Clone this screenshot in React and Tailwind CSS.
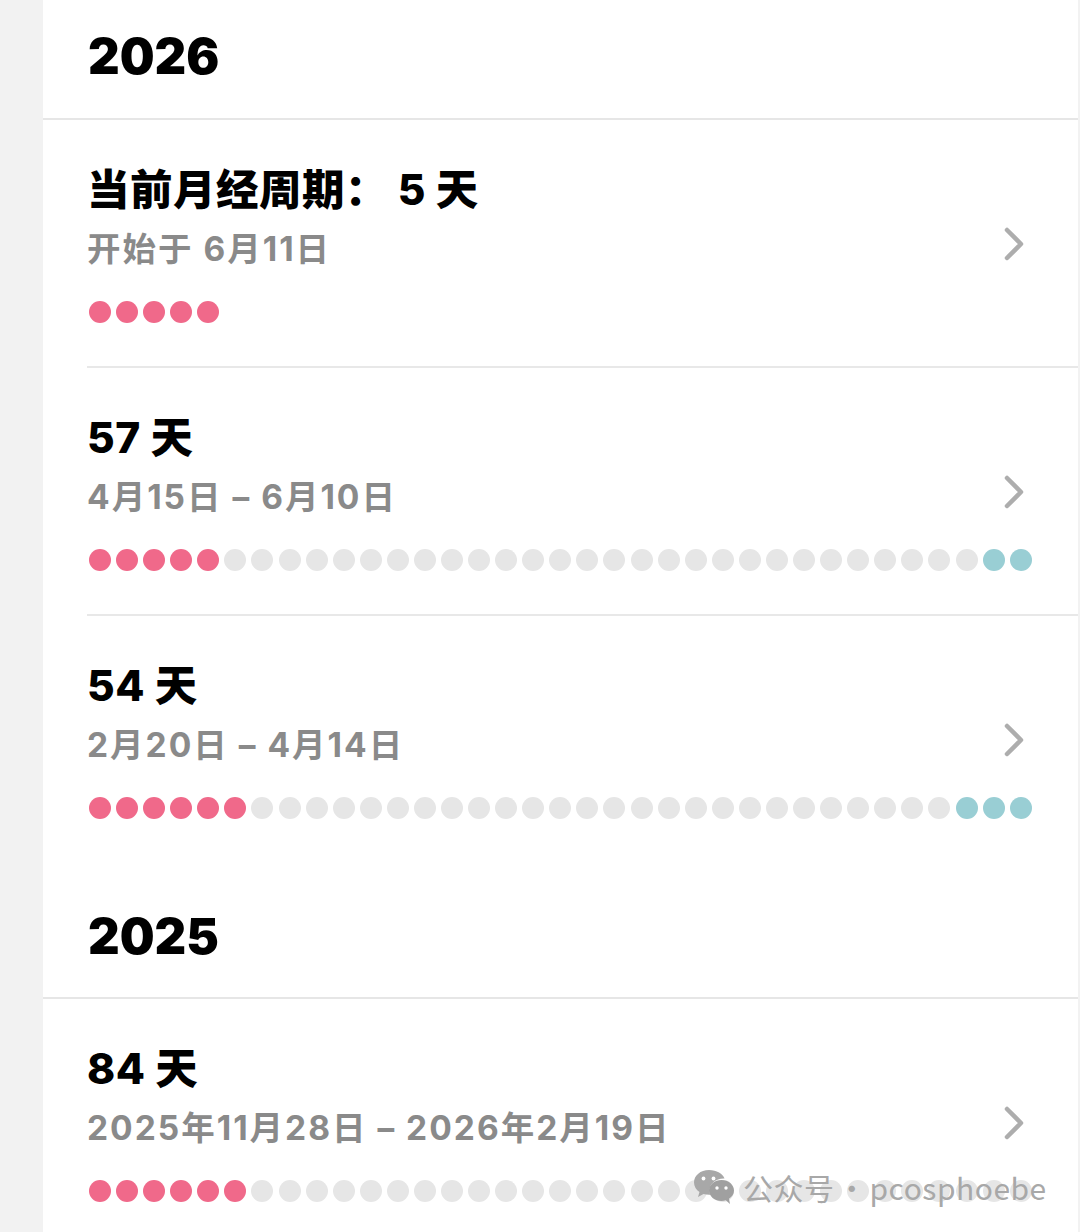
const cjk = 'Inter, "Noto Sans CJK SC", sans-serif';

// red / grey / teal dot counts per cycle row
const sections = [
  {
    year: '2026',
    headerClass: 'h-[120px] pt-[27px]',
    rows: [
      { title: '当前月经周期： 5 天', sub: '开始于 6月11日', red: 5, grey: 0, teal: 0 },
      { title: '57 天', sub: '4月15日 – 6月10日', red: 5, grey: 28, teal: 2 },
      { title: '54 天', sub: '2月20日 – 4月14日', red: 6, grey: 26, teal: 3 },
    ],
  },
  {
    year: '2025',
    headerClass: 'h-[135px] pt-[43px]',
    rows: [{ title: '84 天', sub: '2025年11月28日 – 2026年2月19日', red: 6, grey: 29, teal: 0 }],
  },
];

function Dots({ red, grey, teal }) {
  const dots = [
    ...Array(red).fill('bg-[#f0698a]'),
    ...Array(grey).fill('bg-[#e6e6e6]'),
    ...Array(teal).fill('bg-[#99ced4]'),
  ];
  return (
    <div className="flex gap-[5.09px] pl-[2px] h-[24px] items-center">
      {dots.map((c, i) => (
        <div key={i} className={`w-[22px] h-[22px] rounded-full shrink-0 ${c}`}></div>
      ))}
    </div>
  );
}

function CycleRow({ row, last }) {
  return (
    <div className="relative h-[248px] pl-[44px]">
      <div className={`h-full pt-[45px] ${last ? '' : 'border-b-2 border-[#e8e8e8]'}`}>
        <div className="text-[42.5px] leading-[50px] font-extrabold text-black whitespace-pre tracking-[0.5px]">{row.title}</div>
        <div className="text-[33.5px] leading-[40px] mt-[14px] font-bold text-[#8a8a8a] tracking-[2px]">{row.sub}</div>
        <div className="mt-[31px]">
          <Dots red={row.red} grey={row.grey} teal={row.teal} />
        </div>
      </div>
      <svg className="absolute left-[961px] top-[107px]" width="22" height="36" viewBox="0 0 22 36" fill="none">
        <path d="M3 3l14 14L3 31" stroke="#adadad" strokeWidth="4.500" strokeLinecap="round" strokeLinejoin="round" />
      </svg>
    </div>
  );
}

export default function App() {
  return (
    <div className="relative w-[1080px] h-[1232px] overflow-hidden bg-[#f2f2f2]" style={{ fontFamily: cjk }}>
      <div className="ml-[43px] w-[1035px] h-full bg-white">
        {sections.map((s) => (
          <div key={s.year}>
            <div className={`${s.headerClass} pl-[45px] border-b-2 border-[#e6e6e6]`}>
              <div className="text-[49px] leading-[60px] font-black text-black">{s.year}</div>
            </div>
            {s.rows.map((r, i) => (
              <CycleRow key={r.title} row={r} last={i === s.rows.length - 1} />
            ))}
          </div>
        ))}
      </div>

      {/* Watermark */}
      <div className="absolute left-[693px] top-[1169px] flex items-center gap-[8px] text-[#a8a8a8]">
        <svg width="42" height="36" viewBox="0 0 42 36">
          <path d="M16 1C7.5 1 1 6.500 1 13.500c0 4 2.200 7.300 5.500 9.600L5 28l5.500-3c1.800.5 3.500.8 5.500.8l1.200 0c-.5-1.300-.7-2.600-.7-4 0-6.800 6.300-12.200 14.200-12.200h.8C30 4.800 23.600 1 16 1z" fill="#a8a8a8" />
          <path d="M41 21.500C41 15.700 35.400 11 28.500 11S16 15.700 16 21.500 21.600 32 28.500 32c1.500 0 3-.2 4.300-.7L37 35l-1-5.200c3-2 5-5 5-8.300z" fill="#a0a0a0" />
          <circle cx="10.500" cy="9.500" r="1.900" fill="#fff" />
          <circle cx="20.500" cy="9.500" r="1.900" fill="#fff" />
          <circle cx="24" cy="19" r="1.700" fill="#fff" />
          <circle cx="33" cy="19" r="1.700" fill="#fff" />
        </svg>
        <span className="flex text-[30px] leading-[36px] tracking-[0.5px]" style={{ fontFamily: '"Noto Sans CJK SC", "Noto Sans", sans-serif' }}>
          <span>公众号</span>
          <span className="w-[35px] text-center">·</span>
          <span>pcosphoebe</span>
        </span>
      </div>
    </div>
  );
}
